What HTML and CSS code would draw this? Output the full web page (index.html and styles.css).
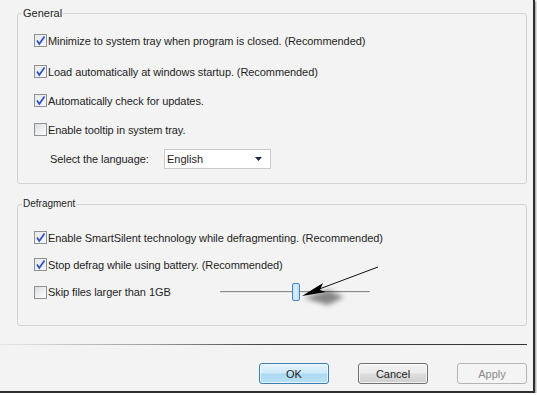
FILE: index.html
```html
<!DOCTYPE html>
<html>
<head>
<meta charset="utf-8">
<link rel="stylesheet" href="styles.css">
</head>
<body>
<div class="window">
  <fieldset class="group general">
    <legend>General</legend>
    <div class="row first">
      <span class="cb checked"><svg width="11" height="11" viewBox="0 0 11 11"><path d="M2 5.5 L4.3 9 L9.5 1.5" fill="none" stroke="#2d4fc4" stroke-width="1.7"/></svg></span>
      <span class="label">Minimize to system tray when program is closed. (Recommended)</span>
    </div>
    <div class="row">
      <span class="cb checked"><svg width="11" height="11" viewBox="0 0 11 11"><path d="M2 5.5 L4.3 9 L9.5 1.5" fill="none" stroke="#2d4fc4" stroke-width="1.7"/></svg></span>
      <span class="label">Load automatically at windows startup. (Recommended)</span>
    </div>
    <div class="row">
      <span class="cb checked"><svg width="11" height="11" viewBox="0 0 11 11"><path d="M2 5.5 L4.3 9 L9.5 1.5" fill="none" stroke="#2d4fc4" stroke-width="1.7"/></svg></span>
      <span class="label">Automatically check for updates.</span>
    </div>
    <div class="row">
      <span class="cb"></span>
      <span class="label">Enable tooltip in system tray.</span>
    </div>
    <div class="row lang">
      <span class="lang-label">Select the language:</span>
      <div class="select">
        <span>English</span>
        <svg width="7" height="4" viewBox="0 0 7 4"><path d="M0 0 H7 L3.5 4 Z" fill="#1c2450"/></svg>
      </div>
    </div>
  </fieldset>

  <fieldset class="group defrag">
    <legend>Defragment</legend>
    <div class="row">
      <span class="cb checked"><svg width="11" height="11" viewBox="0 0 11 11"><path d="M2 5.5 L4.3 9 L9.5 1.5" fill="none" stroke="#2d4fc4" stroke-width="1.7"/></svg></span>
      <span class="label">Enable SmartSilent technology while defragmenting. (Recommended)</span>
    </div>
    <div class="row">
      <span class="cb checked"><svg width="11" height="11" viewBox="0 0 11 11"><path d="M2 5.5 L4.3 9 L9.5 1.5" fill="none" stroke="#2d4fc4" stroke-width="1.7"/></svg></span>
      <span class="label">Stop defrag while using battery. (Recommended)</span>
    </div>
    <div class="row last">
      <span class="cb"></span>
      <span class="label skip">Skip files larger than 1GB</span>
      <div class="slider">
        <div class="track"></div>
        <div class="thumb" style="left: 72px"></div>
      </div>
    </div>
    <svg class="arrow" width="90" height="50" viewBox="0 0 90 50">
      <defs>
        <filter id="blur" x="-50%" y="-50%" width="200%" height="200%">
          <feGaussianBlur stdDeviation="2.5"/>
        </filter>
      </defs>
      <polygon points="8,34 32,26 48,33 32,41" fill="rgba(0,0,0,0.45)" filter="url(#blur)"/>
      <line x1="82" y1="3" x2="18" y2="27" stroke="#111" stroke-width="1"/>
      <polygon points="6,32 27,19 24,26 30,28" fill="#000"/>
    </svg>
  </fieldset>

  <div class="sep"></div>

  <div class="buttons">
    <button class="btn ok">OK</button>
    <button class="btn cancel">Cancel</button>
    <button class="btn apply" disabled>Apply</button>
  </div>
</div>
</body>
</html>
```

FILE: styles.css
```css
html, body {
  margin: 0;
  padding: 0;
  background: #ffffff;
}

body {
  font-family: "Liberation Sans", Arial, sans-serif;
  font-size: 11px;
  color: #1e1e1e;
}

.window {
  box-sizing: border-box;
  width: 535px;
  height: 393px;
  background: #f3f3f3;
  border-right: 2px solid #2e2e2e;
  border-bottom: 2px solid #2e2e2e;
  box-shadow: 1px 1px 2px rgba(0, 0, 0, 0.45);
  padding-top: 7px;
}

.group {
  box-sizing: border-box;
  width: 510px;
  margin: 0 0 0 17px;
  padding: 0 0 0 16px;
  border: 1px solid #d3d3d3;
  border-radius: 3px;
  min-width: 0;
}

.group legend {
  margin-left: -12px;
  padding: 0 1px;
  line-height: 13px;
  font-size: 11px;
}

.general {
  padding-top: 6px;
  padding-bottom: 10px;
}

.defrag {
  position: relative;
  margin-top: 14px;
  padding-top: 14px;
  padding-bottom: 19px;
}

.defrag legend {
  font-size: 10px;
  line-height: 12px;
  margin-left: -12px;
}

.row {
  display: flex;
  align-items: center;
  height: 29px;
}

.general .row.first {
  margin-bottom: 2px;
}

.defrag .row {
  height: 27px;
}

.defrag .row.last {
  height: 28px;
}

.cb {
  box-sizing: border-box;
  width: 13px;
  height: 13px;
  border: 1px solid #8e9297;
  background: linear-gradient(135deg, #d9dbde 0%, #f0f1f2 60%, #fbfbfb 100%);
  display: flex;
  align-items: center;
  justify-content: center;
  flex: none;
}

.cb.checked {
  background: linear-gradient(135deg, #e6e8ea 0%, #f7f7f8 100%);
}

.cb svg {
  display: block;
}

.label {
  margin-left: 1px;
  white-space: nowrap;
  letter-spacing: -0.08px;
}

.label.skip {
  width: 172px;
}

.lang-label {
  margin-left: 16px;
  width: 114px;
  white-space: nowrap;
  letter-spacing: -0.08px;
}

.select {
  box-sizing: border-box;
  width: 107px;
  height: 20px;
  background: #ffffff;
  border: 1px solid #cacaca;
  display: flex;
  align-items: center;
  justify-content: space-between;
  padding: 0 8px 0 2px;
  font-size: 11px;
}

.slider {
  position: relative;
  width: 150px;
  height: 18px;
}

.track {
  position: absolute;
  left: 0;
  right: 0;
  top: 8px;
  height: 1px;
  background: #8a8a8a;
  border-bottom: 1px solid #e2e2e2;
  border-radius: 1px;
}

.thumb {
  position: absolute;
  top: 0;
  box-sizing: border-box;
  width: 8px;
  height: 18px;
  border: 1px solid #4d86bd;
  border-radius: 2px;
  background: linear-gradient(90deg, #bfe0f8, #d8edfb 50%, #b6d9f4);
}

.arrow {
  position: absolute;
  left: 278px;
  top: 54px;
}

.sep {
  width: 527px;
  height: 1px;
  margin-top: 18px;
  background: linear-gradient(90deg, #e8e8e8 0%, #9a9a9a 30%, #444 50%, #333 100%);
}

.buttons {
  width: 527px;
  display: flex;
  justify-content: flex-end;
  gap: 29px;
  margin-top: 18px;
}

.btn {
  box-sizing: border-box;
  width: 70px;
  height: 21px;
  padding: 0;
  font-family: "Liberation Sans", Arial, sans-serif;
  font-size: 11px;
  color: #1e1e1e;
  border-radius: 3px;
}

.btn.ok {
  border: 1px solid #3c7fb1;
  background: linear-gradient(180deg, #e3f3fc 0%, #cfeaf9 45%, #aad9f2 55%, #b9e1f6 100%);
  box-shadow: inset 0 0 0 1px rgba(255, 255, 255, 0.6);
}

.btn.cancel {
  border: 1px solid #707070;
  background: linear-gradient(180deg, #f3f3f3 0%, #ebebeb 45%, #dddddd 55%, #cfcfcf 100%);
  box-shadow: inset 0 0 0 1px rgba(255, 255, 255, 0.7);
}

.btn.apply {
  border: 1px solid #b5b5b5;
  background: #f4f4f4;
  color: #8a8a8a;
}
```
